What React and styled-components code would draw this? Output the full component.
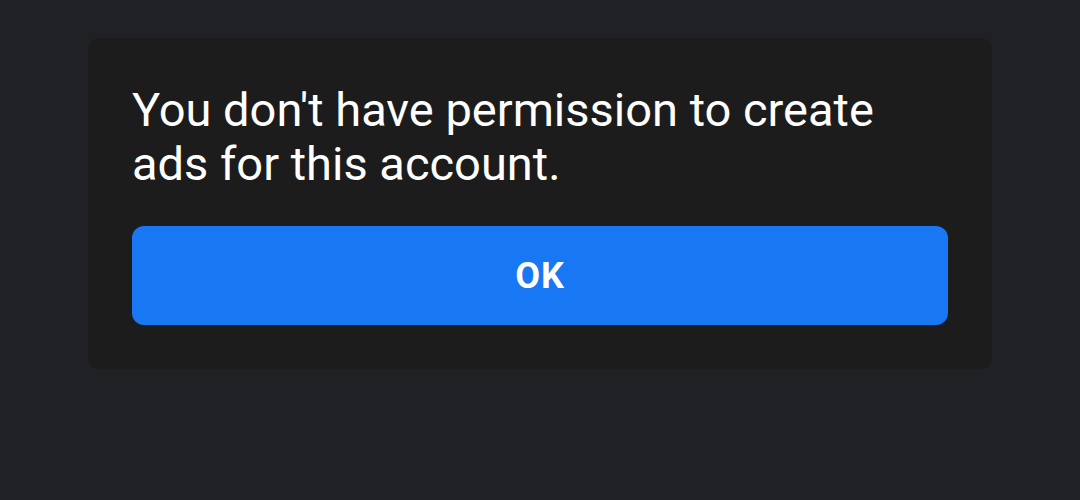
import React from 'react';
import styled, { createGlobalStyle } from 'styled-components';

const GlobalStyle = createGlobalStyle`
  html, body {
    margin: 0;
    padding: 0;
    background-color: #202124;
    font-family: Roboto, "Liberation Sans", sans-serif;
  }
`;

const Page = styled.div`
  width: 1080px;
  height: 500px;
  padding: 38px 88px 0;
  box-sizing: border-box;
`;

const Dialog = styled.div`
  background-color: #1c1c1d;
  border-radius: 12px;
  padding: 45px 44px 44px;
  display: flex;
  flex-direction: column;
  gap: 35px;
`;

const Message = styled.p`
  margin: 0;
  color: #ffffff;
  font-size: 47px;
  line-height: 54px;
  font-weight: 400;
`;

const OkButton = styled.button`
  height: 99px;
  border: none;
  border-radius: 12px;
  background-color: #1877f2;
  color: #ffffff;
  font-family: inherit;
  font-size: 36px;
  font-weight: 700;
  letter-spacing: 1px;
  cursor: pointer;
`;

const App = () => (
  <>
    <GlobalStyle />
    <Page>
      <Dialog>
        <Message>
          You don't have permission to create
          <br />
          ads for this account.
        </Message>
        <OkButton>OK</OkButton>
      </Dialog>
    </Page>
  </>
);

export default App;
